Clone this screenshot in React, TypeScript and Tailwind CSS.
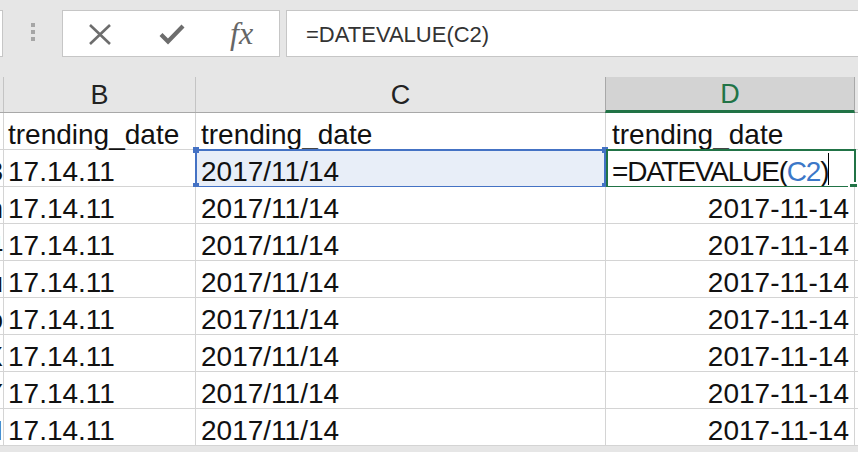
import React from "react";

const stub = ["", "3", "n", "4", "u", "o", "X", "Y", "I"];

function Row({ i }: { i: number }) {
  const first = i === 0;
  const second = i === 1;
  return (
    <div className="relative flex h-[37px] border-b border-[#d4d4d4] bg-white">
      <div className="w-[4px] shrink-0 overflow-hidden border-r border-[#d4d4d4] flex items-end justify-end">
        <span className="whitespace-nowrap leading-[29px]">{stub[i]}</span>
      </div>
      <div className="w-[192px] shrink-0 border-r border-[#d4d4d4] pl-[4px] flex items-end leading-[29px]">
        {first ? "trending_date" : "17.14.11"}
      </div>
      <div
        className={
          "w-[410px] shrink-0 border-r border-[#d4d4d4] pl-[5px] flex items-end leading-[29px] " +
          (second ? "bg-[#e8eef8]" : "")
        }
      >
        {first ? "trending_date" : "2017/11/14"}
      </div>
      <div
        className={
          "w-[249px] shrink-0 border-r border-[#d4d4d4] flex items-end leading-[29px] " +
          (first || second ? "pl-[6px]" : "justify-end pr-[5px]")
        }
      >
        {first ? (
          "trending_date"
        ) : second ? (
          <span className="relative tracking-[-1.2px]">
            =DATEVALUE(<span className="text-[#3c78c8]">C2</span>)
            <span className="absolute right-[-1px] top-[-4px] h-[32px] w-[1.5px] bg-black" />
          </span>
        ) : (
          "2017-11-14"
        )}
      </div>
      <div className="flex-1 bg-white" />
      {second && (
        <>
          {/* C2 selection */}
          <div className="pointer-events-none absolute left-[195px] top-[-1px] h-[39px] w-[411px] border-2 border-[#4472c4]" />
          <div className="absolute left-[193px] top-[-3px] h-[6px] w-[6px] bg-[#4472c4]" />
          <div className="absolute left-[193px] top-[33px] h-[6px] w-[6px] bg-[#4472c4]" />
          <div className="absolute left-[602px] top-[-3px] h-[6px] w-[6px] bg-[#4472c4]" />
          <div className="absolute left-[602px] top-[33px] h-[6px] w-[6px] bg-[#4472c4]" />
          {/* D2 active */}
          <div className="pointer-events-none absolute left-[606px] top-[-1px] h-[39px] w-[250px] border-[2.5px] border-[#217346]" />
          <div className="absolute left-[848px] top-[32px] h-[9px] w-[10px] bg-white" />
          <div className="absolute left-[850px] top-[34px] h-[6px] w-[7px] bg-[#217346]" />
        </>
      )}
    </div>
  );
}

export default function App() {
  return (
    <div
      className="w-[858px] h-[452px] overflow-hidden bg-[#e6e6e6] text-[28px] text-[#111]"
      style={{ fontFamily: '"Liberation Sans", Arial, sans-serif' }}
    >
      {/* toolbar */}
      <div className="flex h-[77px] items-start pt-[10px]">
        <div className="h-[47px] w-[3px] shrink-0 border border-l-0 border-[#c6c6c6] bg-white" />
        <div className="flex w-[59px] shrink-0 flex-col items-center gap-[3px] pt-[13px] pl-[1px]">
          <div className="h-[4px] w-[4px] bg-[#a6a6a6]" />
          <div className="h-[4px] w-[4px] bg-[#a6a6a6]" />
          <div className="h-[4px] w-[4px] bg-[#a6a6a6]" />
        </div>
        <div className="relative flex h-[47px] w-[218px] shrink-0 items-center border border-[#c6c6c6] bg-white">
          <svg className="absolute left-[25px] top-[13px]" width="24" height="21" viewBox="0 0 24 21">
            <path d="M2 1 L22 20 M22 1 L2 20" stroke="#6d6d6d" strokeWidth="2.6" fill="none" />
          </svg>
          <svg className="absolute left-[96px] top-[12px]" width="26" height="22" viewBox="0 0 26 22">
            <path d="M2 11.5 L9 18.5 L24 3" stroke="#6d6d6d" strokeWidth="4.2" fill="none" strokeLinejoin="miter" />
          </svg>
          <span
            className="absolute left-[167px] top-[-2px] text-[32px] italic text-[#666]"
            style={{ fontFamily: '"Liberation Serif", "Times New Roman", serif' }}
          >
            fx
          </span>
        </div>
        <div className="ml-[6px] flex h-[47px] flex-1 items-center border border-r-0 border-[#c6c6c6] bg-white pl-[19px] pt-[1px] text-[22px] text-[#333]">
          =DATEVALUE(C2)
        </div>
      </div>

      {/* column header */}
      <div className="flex h-[36px] border-b border-[#a8a8a8] text-[27px] text-[#222]">
        <div className="w-[4px] shrink-0 border-r border-[#c4c4c4]" />
        <div className="w-[192px] shrink-0 border-r border-[#c4c4c4] flex items-center justify-center leading-none pt-[1px]">
          B
        </div>
        <div className="w-[409px] shrink-0 flex items-center justify-center leading-none pt-[1px]">
          C
        </div>
        <div className="w-[250px] shrink-0 border-l border-r border-[#a8a8a8] bg-[#d3d3d3] flex items-center justify-center leading-none pt-[1px] text-[#217346] border-b-[3px] border-b-[#217346] mb-[-1px]">
          D
        </div>
        <div className="flex-1" />
      </div>

      {Array.from({ length: 9 }).map((_, i) => (
        <Row key={i} i={i} />
      ))}
    </div>
  );
}
